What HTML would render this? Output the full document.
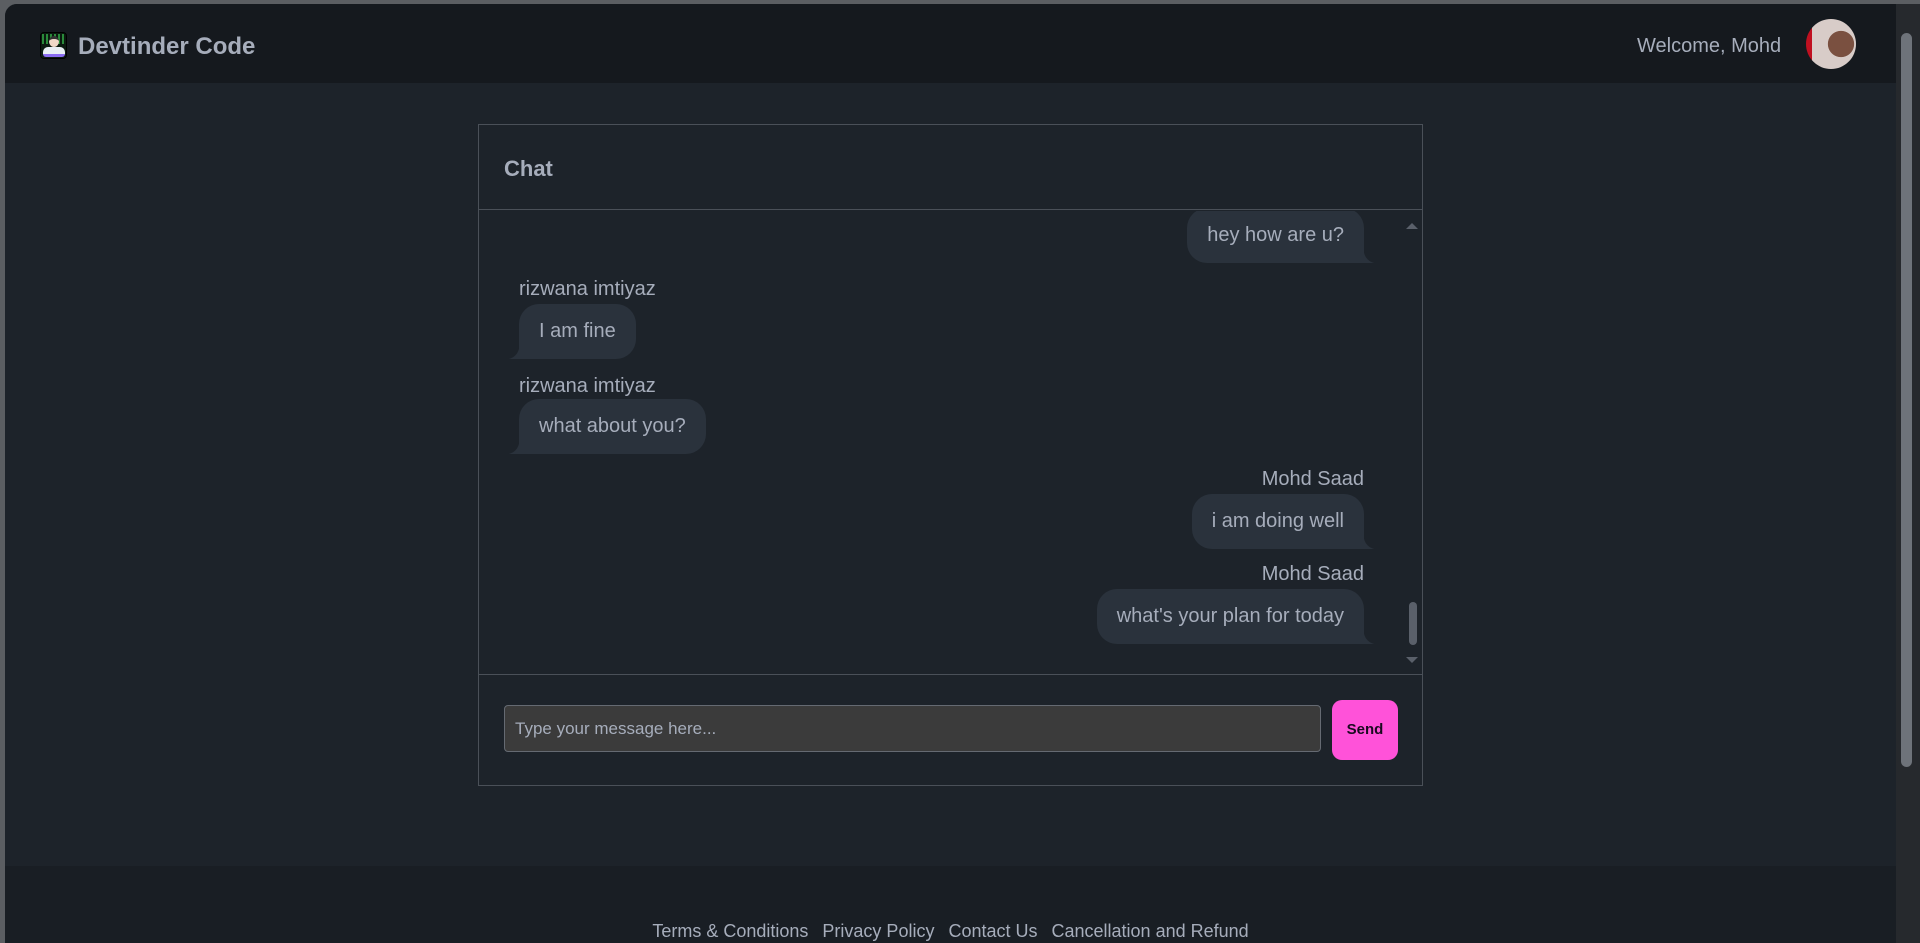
<!DOCTYPE html>
<html><head><meta charset="utf-8"><style>
*{box-sizing:border-box;margin:0;padding:0}
html,body{width:1920px;height:943px;overflow:hidden;background:#5b5e62;font-family:"Liberation Sans",sans-serif;color:#a6adbb}
.frame{position:absolute;left:5px;top:4px;width:1915px;height:939px;background:#1d232a;border-top-left-radius:12px;overflow:hidden}
.hdr{position:absolute;left:0;top:0;width:1891px;height:79px;background:#15191e}
.logo{position:absolute;left:35px;top:28px;width:27px;height:27px;border-radius:4px;background:#0b1a10;overflow:hidden;border:1px solid #000}
.title{position:absolute;left:73px;top:29px;font-size:24px;font-weight:bold;color:#a6adbb}
.welcome{position:absolute;left:1632px;top:31px;font-size:20px}
.avatar{position:absolute;left:1801px;top:15px;width:50px;height:50px;border-radius:50%;background:radial-gradient(circle at 70% 50%,#7a5040 0 30%,transparent 31%),linear-gradient(90deg,#c01020 0 12%,#d8ccc8 12%)}
.sb{position:absolute;left:1891px;top:0;width:24px;height:939px;background:#26292d}
.sbthumb{position:absolute;left:1896px;top:29px;width:11px;height:734px;border-radius:6px;background:#6e737a}
.card{position:absolute;left:473px;top:120px;width:945px;height:662px;border:1px solid #4a5058}
.chdr{position:absolute;left:0;top:0;width:100%;height:85px;border-bottom:1px solid #4a5058}
.chdr span{position:absolute;left:25px;top:31px;font-size:22px;font-weight:bold}
.msgs{position:absolute;left:0;top:86px;width:100%;height:464px;border-bottom:1px solid #4a5058;overflow:hidden}
.b{position:absolute;height:55px;background:#2a323c;border-radius:20px;font-size:20px;line-height:55px;padding:0 20px;white-space:nowrap;color:#a6adbb}
.b.r{border-bottom-right-radius:0}
.b.l{border-bottom-left-radius:0}
.b.r::after{content:"";position:absolute;right:-13px;bottom:0;width:13px;height:13px;background:radial-gradient(circle at 100% 0,transparent 13px,#2a323c 13.5px)}
.b.l::after{content:"";position:absolute;left:-13px;bottom:0;width:13px;height:13px;background:radial-gradient(circle at 0 0,transparent 13px,#2a323c 13.5px)}
.n{position:absolute;font-size:20px;white-space:nowrap}
.input{position:absolute;left:25px;top:580px;width:817px;height:47px;background:#3b3b3b;border:1px solid #656a72;border-radius:4px;font-size:17px;line-height:45px;padding-left:10px;color:#a6adbb}
.send{position:absolute;left:853px;top:575px;width:66px;height:60px;background:#ff52d9;border-radius:10px;color:#1a0a20;font-size:15px;font-weight:bold;text-align:center;line-height:60px}
.foot{position:absolute;left:0;top:862px;width:1891px;height:77px;background:#191e24}
.links{position:absolute;left:0;top:55px;width:100%;text-align:center;font-size:18px;white-space:nowrap}
.links span{margin:0 7px}
</style></head><body>
<div class="frame">
 <div class="hdr">
  <div class="logo">
   <div style="position:absolute;left:1px;top:1px;width:24px;height:10px;background:repeating-linear-gradient(90deg,#2a8a3a 0 2px,transparent 2px 4px)"></div>
   <div style="position:absolute;left:8px;top:3px;width:10px;height:11px;border-radius:50%;background:#f0d8c8;border-top:3px solid #333"></div>
   <div style="position:absolute;left:2px;top:14px;width:22px;height:10px;border-radius:5px 5px 3px 3px;background:#e8eef4;border-bottom:3px solid #8a6cf0"></div>
  </div>
  <div class="title">Devtinder Code</div>
  <div class="welcome">Welcome, Mohd</div>
  <div class="avatar"></div>
 </div>
 <div class="sb"></div>
 <div class="sbthumb"></div>
 <div class="card">
  <div class="chdr"><span>Chat</span></div>
  <div class="msgs">
   <div class="b r" style="right:58px;top:-3px">hey how are u?</div>
   <div class="n" style="left:40px;top:67px">rizwana imtiyaz</div>
   <div class="b l" style="left:40px;top:93px">I am fine</div>
   <div class="n" style="left:40px;top:164px">rizwana imtiyaz</div>
   <div class="b l" style="left:40px;top:188px">what about you?</div>
   <div class="n" style="right:58px;top:257px">Mohd Saad</div>
   <div class="b r" style="right:58px;top:283px">i am doing well</div>
   <div class="n" style="right:58px;top:352px">Mohd Saad</div>
   <div class="b r" style="right:58px;top:378px">what's your plan for today</div>
   <div style="position:absolute;left:927px;top:12px;width:0;height:0;border:6px solid transparent;border-bottom:6px solid #5a606a;border-top:0"></div>
   <div style="position:absolute;left:927px;top:446px;width:0;height:0;border:6px solid transparent;border-top:6px solid #5a606a;border-bottom:0"></div>
   <div style="position:absolute;left:930px;top:391px;width:8px;height:43px;border-radius:4px;background:#5a606a"></div>
  </div>
  <div class="input">Type your message here...</div>
  <div class="send">Send</div>
 </div>
 <div class="foot"><div class="links"><span>Terms &amp; Conditions</span><span>Privacy Policy</span><span>Contact Us</span><span>Cancellation and Refund</span></div></div>
</div>
</body></html>
